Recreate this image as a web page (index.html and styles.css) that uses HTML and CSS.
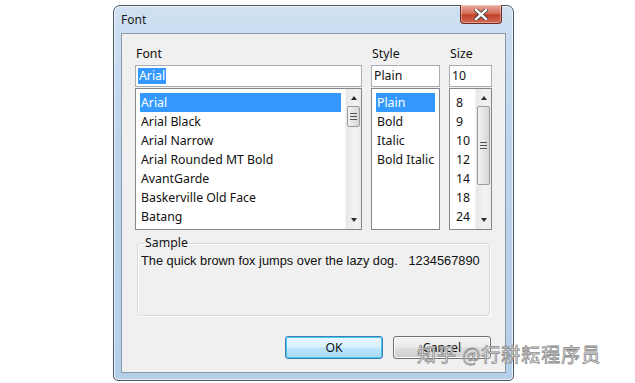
FILE: index.html
```html
<!DOCTYPE html>
<html lang="en">
<head>
    <meta charset="UTF-8">
    <meta name="viewport" content="width=device-width, initial-scale=1.0">
    <title>Font</title>
    <link rel="stylesheet" href="styles.css">
</head>
<body>
    <!-- Dialog Window -->
    <div class="window">
        <div class="title-bar">
            <span class="title">Font</span>
            <button class="close-btn" aria-label="Close">
                <svg width="14" height="11" viewBox="0 0 14 11">
                    <path d="M2 1 L12 10 M12 1 L2 10" stroke="#3a3a3a" stroke-width="4.2" stroke-linecap="square"/>
                    <path d="M2 1 L12 10 M12 1 L2 10" stroke="#fff" stroke-width="2.4" stroke-linecap="square"/>
                </svg>
            </button>
        </div>

        <div class="client">
            <div class="chooser">
                <!-- Font column -->
                <div class="column">
                    <div class="label">Font</div>
                    <div class="field"><span class="selected-text">Arial</span></div>
                    <div class="list">
                        <ul class="items">
                            <li class="active">Arial</li>
                            <li>Arial Black</li>
                            <li>Arial Narrow</li>
                            <li>Arial Rounded MT Bold</li>
                            <li>AvantGarde</li>
                            <li>Baskerville Old Face</li>
                            <li>Batang</li>
                        </ul>
                        <div class="scrollbar">
                            <span class="arrow up"></span>
                            <div class="track">
                                <div class="thumb thumb-small"><span class="grip"></span></div>
                            </div>
                            <span class="arrow down"></span>
                        </div>
                    </div>
                </div>

                <!-- Style column -->
                <div class="column">
                    <div class="label">Style</div>
                    <div class="field">Plain</div>
                    <div class="list">
                        <ul class="items">
                            <li class="active">Plain</li>
                            <li>Bold</li>
                            <li>Italic</li>
                            <li>Bold Italic</li>
                        </ul>
                    </div>
                </div>

                <!-- Size column -->
                <div class="column">
                    <div class="label">Size</div>
                    <div class="field">10</div>
                    <div class="list">
                        <ul class="items sizes">
                            <li>8</li>
                            <li>9</li>
                            <li>10</li>
                            <li>12</li>
                            <li>14</li>
                            <li>18</li>
                            <li>24</li>
                        </ul>
                        <div class="scrollbar">
                            <span class="arrow up"></span>
                            <div class="track">
                                <div class="thumb thumb-large"><span class="grip"></span></div>
                            </div>
                            <span class="arrow down"></span>
                        </div>
                    </div>
                </div>
            </div>

            <!-- Sample -->
            <fieldset class="sample">
                <legend>Sample</legend>
                <p class="sample-text">The quick brown fox jumps over the lazy dog.&nbsp;&nbsp;&nbsp;1234567890</p>
            </fieldset>

            <!-- Buttons -->
            <div class="buttons">
                <button class="btn btn-default">OK</button>
                <button class="btn">Cancel</button>
            </div>
        </div>
    </div>

    <!-- Watermark -->
    <div class="watermark">知乎 @行耕耘程序员</div>
</body>
</html>
```

FILE: styles.css
```css
/* General Reset */
* {
    margin: 0;
    padding: 0;
    box-sizing: border-box;
}

body {
    background: #fff;
    width: 635px;
    height: 383px;
    overflow: hidden;
    position: relative;
    font-family: 'Noto Sans', 'DejaVu Sans', sans-serif;
    font-size: 12.3px;
    color: #111;
}

/* Window Frame */
.window {
    margin: 5px 0 0 113px;
    width: 401px;
    height: 376px;
    border: 1px solid #4a5563;
    border-radius: 7px 7px 5px 5px;
    background: linear-gradient(to bottom, #cfe0f2 0%, #bcd3eb 40%, #b6cfe9 100%);
    box-shadow: inset 0 0 0 1px rgba(255, 255, 255, 0.7);
    display: flex;
    flex-direction: column;
}

.title-bar {
    height: 27px;
    display: flex;
    align-items: flex-start;
    justify-content: space-between;
    padding-left: 7px;
}

.title {
    margin-top: 5px;
    font-size: 12px;
    color: #1a1a1a;
}

.close-btn {
    width: 42px;
    height: 19px;
    margin-right: 11px;
    margin-top: -1px;
    border: 1px solid #6b2a20;
    border-top: none;
    border-radius: 0 0 4px 4px;
    background: linear-gradient(to bottom, #e9a99c 0%, #d7735f 45%, #c2412a 55%, #d26a53 100%);
    box-shadow: inset 0 0 0 1px rgba(255, 255, 255, 0.35);
    display: flex;
    align-items: center;
    justify-content: center;
}

/* Client Area */
.client {
    flex: 1;
    margin: 0 7px 7px 7px;
    background: #f0f0f0;
    border: 1px solid #8a9aab;
    padding: 12px 14px 0 13px;
    display: flex;
    flex-direction: column;
}

.chooser {
    display: grid;
    grid-template-columns: 227px 69px 43px;
    column-gap: 9px;
}

.column {
    display: flex;
    flex-direction: column;
}

.label {
    height: 15px;
    line-height: 15px;
    margin-bottom: 4px;
    padding-left: 1px;
}

.field {
    height: 22px;
    border: 1px solid #abadb3;
    background: #fff;
    padding: 2px 2px 0 2px;
    line-height: 16px;
    margin-bottom: 1px;
}

.selected-text {
    background: #3399ff;
    color: #fff;
    display: inline-block;
    padding: 0 1px;
}

/* Lists */
.list {
    height: 142px;
    border: 1px solid #828790;
    background: #fff;
    display: flex;
    padding: 4px 0 0 4px;
}

.items {
    list-style: none;
    flex: 1;
}

.items li {
    height: 19px;
    line-height: 19px;
    padding-left: 1px;
    white-space: nowrap;
    margin-right: 4px;
}

.items li.active {
    background: #3399ff;
    color: #fff;
}

.sizes li {
    padding-left: 2px;
}

/* Scrollbar */
.scrollbar {
    width: 16px;
    margin: -4px 0 0 0;
    background: linear-gradient(to right, #e8e8e8, #f2f2f2 60%, #ececec);
    display: flex;
    flex-direction: column;
    align-items: center;
    border-left: 1px solid #f4f4f4;
}

.arrow {
    width: 0;
    height: 0;
    border-left: 3.5px solid transparent;
    border-right: 3.5px solid transparent;
    margin: 7px 0 6px 0;
}

.arrow.up {
    border-bottom: 4px solid #2b2b2b;
}

.arrow.down {
    border-top: 4px solid #2b2b2b;
    margin: 6px 0 7px 0;
}

.track {
    flex: 1;
    width: 100%;
    padding: 0 1px;
}

.thumb {
    border: 1px solid #9c9c9c;
    border-radius: 2px;
    background: linear-gradient(to right, #f3f3f3, #e4e4e4 50%, #d6d6d6);
    display: flex;
    align-items: center;
    justify-content: center;
}

.thumb-small {
    height: 21px;
}

.thumb-large {
    height: 79px;
}

.grip {
    width: 7px;
    height: 7px;
    border-top: 1px solid #555;
    border-bottom: 1px solid #555;
    position: relative;
}

.grip::after {
    content: '';
    position: absolute;
    left: 0;
    right: 0;
    top: 2px;
    border-top: 1px solid #555;
}

/* Sample */
.sample {
    margin: 6px 1px 0 2px;
    height: 80px;
    border: 1px solid #d9dcdf;
    border-radius: 3px;
    box-shadow: 1px 1px 0 #fff inset, 1px 1px 0 #fff;
    padding: 0 3px;
}

.sample legend {
    padding: 0 1px;
    margin-left: 3px;
    line-height: 14px;
}

.sample-text {
    font-family: 'Liberation Sans', Arial, sans-serif;
    font-size: 12.8px;
    line-height: 16px;
    margin-top: 3px;
    color: #111;
}

/* Buttons */
.buttons {
    display: flex;
    justify-content: flex-end;
    gap: 10px;
    margin-top: 20px;
}

.btn {
    width: 98px;
    height: 23px;
    font-family: 'Noto Sans', 'DejaVu Sans', sans-serif;
    font-size: 12.3px;
    color: #111;
    border: 1px solid #707070;
    border-radius: 3px;
    background: linear-gradient(to bottom, #f2f2f2 0%, #ebebeb 48%, #dddddd 52%, #cfcfcf 100%);
    box-shadow: inset 0 0 0 1px #fcfcfc;
}

.btn-default {
    border-color: #3c7fb1;
    background: linear-gradient(to bottom, #eaf6fd 0%, #d9f0fc 48%, #bee6fd 52%, #a7d9f5 100%);
    box-shadow: inset 0 0 0 1px #48c5f5;
}

/* Watermark overlay */
.watermark {
    position: absolute;
    left: 417px;
    top: 340px;
    font-family: 'Noto Sans CJK SC', sans-serif;
    font-size: 19px;
    color: #fff;
    -webkit-text-stroke: 0.8px #8a8a8a;
    letter-spacing: 1px;
    white-space: nowrap;
}
```
